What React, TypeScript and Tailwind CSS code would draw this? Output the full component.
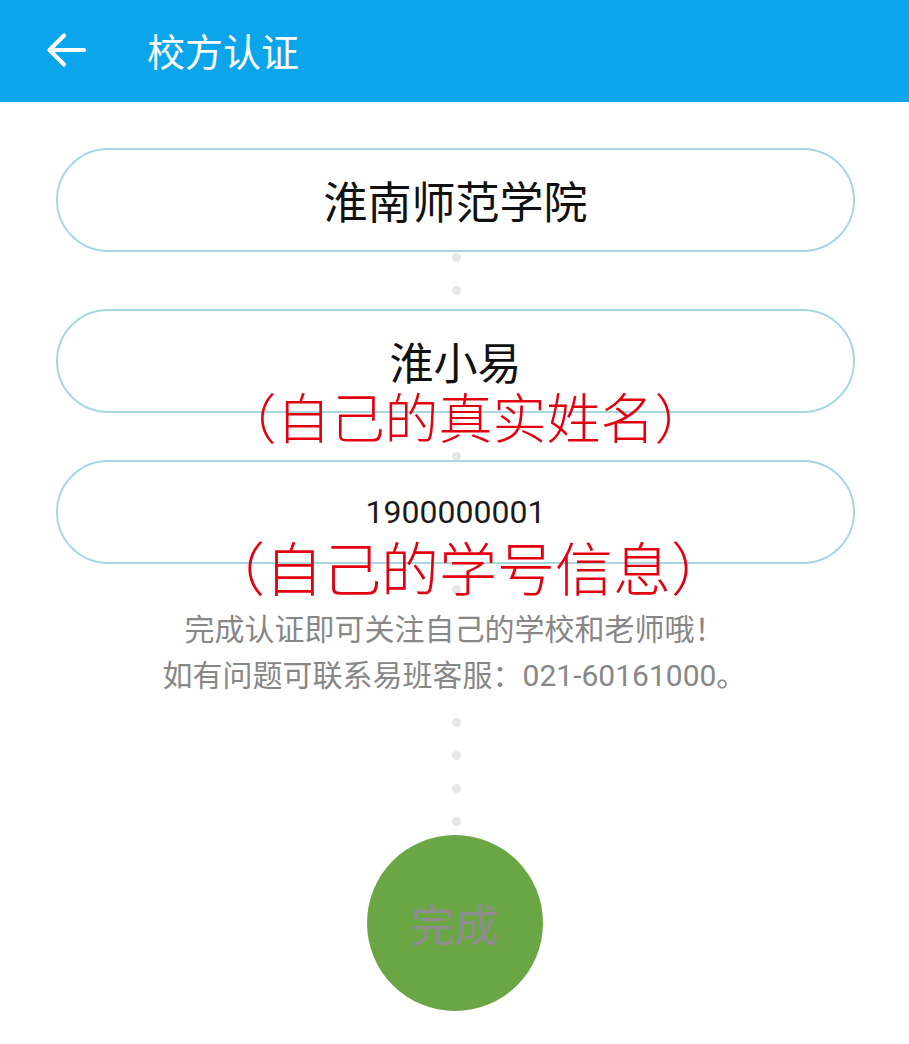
import React from "react";

const dots = Array.from({ length: 18 }, (_, i) => i);

function Pill({ children }: { children: React.ReactNode }) {
  return (
    <div className="mx-[56px] h-[104px] w-[799px] rounded-full border-2 border-[#a8d7e0] bg-white flex items-center justify-center">
      {children}
    </div>
  );
}

export default function App() {
  return (
    <div className="w-[909px] min-h-[1044px] bg-white font-['Noto_Sans_CJK_SC',sans-serif] overflow-hidden">
      <header className="h-[102px] bg-[#0aa5ea] flex items-center">
        <svg
          className="ml-[46px] mb-[2px]"
          width="42"
          height="36"
          viewBox="0 0 42 36"
          fill="none"
          stroke="white"
          strokeWidth="4.2"
          strokeLinecap="round"
          strokeLinejoin="round"
        >
          <path d="M4 18H38" />
          <path d="M18 3.5L3.5 18L18 32.5" />
        </svg>
        <span className="ml-[59px] text-[38px] leading-none text-white mb-[2px]">校方认证</span>
      </header>

      <main className="relative">
        <div className="absolute left-[452px] top-[151px] flex flex-col gap-[24.2px]">
          {dots.map((i) => (
            <div key={i} className="h-[9px] w-[9px] rounded-full bg-[#e7e7ea]" />
          ))}
        </div>

        <div className="relative pt-[46px] flex flex-col">
          <Pill>
            <span className="text-[44px] leading-none text-[#111]">淮南师范学院</span>
          </Pill>

          <div className="relative mt-[57px]">
            <Pill>
              <span className="text-[44px] leading-none text-[#111]">淮小易</span>
            </Pill>
            <div className="absolute left-[22px] right-0 top-[80px] text-center text-[54px] leading-none text-[#e3000f] font-light">
              （自己的真实姓名）
            </div>
          </div>

          <div className="relative mt-[47px]">
            <Pill>
              <span className="font-['Roboto',sans-serif] text-[32px] leading-none text-[#1a1a1a]">1900000001</span>
            </Pill>
            <div className="absolute left-[27px] right-0 top-[77px] text-center text-[58px] leading-none text-[#e3000f] font-light">
              （自己的学号信息）
            </div>
          </div>

          <div className="mt-[43px] bg-white text-center text-[30px] leading-[46px] text-[#878787] font-['Roboto','Noto_Sans_CJK_SC',sans-serif]">
            <p>完成认证即可关注自己的学校和老师哦！</p>
            <p>如有问题可联系易班客服：021-60161000。</p>
          </div>

          <div className="mt-[136px] mb-[33px] flex justify-center">
            <div className="h-[176px] w-[176px] rounded-full bg-[#6ba644] flex items-center justify-center">
              <span className="text-[44px] leading-none text-[#8e8b91]">完成</span>
            </div>
          </div>
        </div>
      </main>
    </div>
  );
}
